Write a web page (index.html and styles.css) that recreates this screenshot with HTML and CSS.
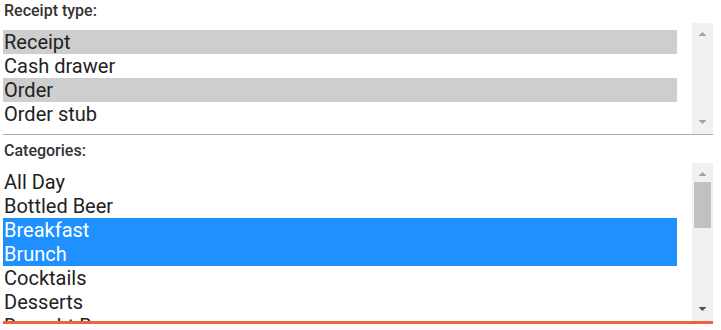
FILE: index.html
```html
<!DOCTYPE html>
<html>
<head>
<meta charset="utf-8">
<link rel="stylesheet" href="styles.css">
</head>
<body>
<div class="form">
  <div class="field">
    <div class="label">Receipt type:</div>
    <div class="listbox listbox-receipt">
      <div class="options">
        <div class="option selected-inactive">Receipt</div>
        <div class="option">Cash drawer</div>
        <div class="option selected-inactive">Order</div>
        <div class="option">Order stub</div>
      </div>
      <div class="scrollbar">
        <div class="sb-button">
          <svg width="21" height="19" viewBox="0 0 21 19"><polygon class="arrow-light" points="6.5,13 14.5,13 10.5,9"/></svg>
        </div>
        <div class="sb-track"></div>
        <div class="sb-button">
          <svg width="21" height="19" viewBox="0 0 21 19"><polygon class="arrow-light" points="6.5,5 14.5,5 10.5,9"/></svg>
        </div>
      </div>
    </div>
  </div>
  <div class="field">
    <div class="label">Categories:</div>
    <div class="listbox listbox-categories">
      <div class="options">
        <div class="option">All Day</div>
        <div class="option">Bottled Beer</div>
        <div class="option selected">Breakfast</div>
        <div class="option selected">Brunch</div>
        <div class="option">Cocktails</div>
        <div class="option">Desserts</div>
        <div class="option">Draught Beer</div>
        <div class="option">Entrees</div>
        <div class="option">Lunch</div>
      </div>
      <div class="scrollbar">
        <div class="sb-button">
          <svg width="21" height="19" viewBox="0 0 21 19"><polygon class="arrow-light" points="6.5,13 14.5,13 10.5,9"/></svg>
        </div>
        <div class="sb-track">
          <div class="sb-thumb"></div>
        </div>
        <div class="sb-button">
          <svg width="21" height="19" viewBox="0 0 21 19"><polygon class="arrow-dark" points="6.5,5 14.5,5 10.5,9"/></svg>
        </div>
      </div>
    </div>
  </div>
</div>
</body>
</html>
```
FILE: styles.css
```css
html, body {
  margin: 0;
  padding: 0;
  background: #ffffff;
}

body {
  font-family: Roboto, "Liberation Sans", sans-serif;
  color: #222222;
  width: 721px;
  height: 330px;
  overflow: hidden;
}

.form {
  display: flex;
  flex-direction: column;
  gap: 5px;
}

.field {
  display: flex;
  flex-direction: column;
}

.label {
  font-size: 16px;
  font-weight: 500;
  line-height: 20px;
  color: #333333;
  padding: 1px 0 0 4px;
  margin-bottom: 2px;
}

.listbox {
  display: flex;
  margin-left: 3px;
  width: 710px;
}

.listbox-receipt {
  height: 111px;
  border-bottom: 1px solid #a7a6c4;
}

.listbox-categories {
  height: 158px;
  border-bottom: 3px solid #f2613e;
}

.options {
  flex: 1;
  padding: 7px 15px 0 0;
  overflow: hidden;
}

.option {
  font-size: 20px;
  line-height: 24px;
  height: 24px;
  padding-left: 1px;
  white-space: nowrap;
}

.selected-inactive {
  background: #cecece;
}

.selected {
  background: #1e90ff;
  color: #ffffff;
}

.scrollbar {
  width: 21px;
  background: #f1f1f1;
  display: flex;
  flex-direction: column;
}

.sb-button {
  height: 19px;
  flex: none;
}

.sb-button svg {
  display: block;
}

.sb-track {
  flex: 1;
  padding: 0 2px;
}

.sb-thumb {
  height: 46px;
  background: #c1c1c1;
}

.arrow-light {
  fill: #a3a3a3;
}

.arrow-dark {
  fill: #505050;
}
```
